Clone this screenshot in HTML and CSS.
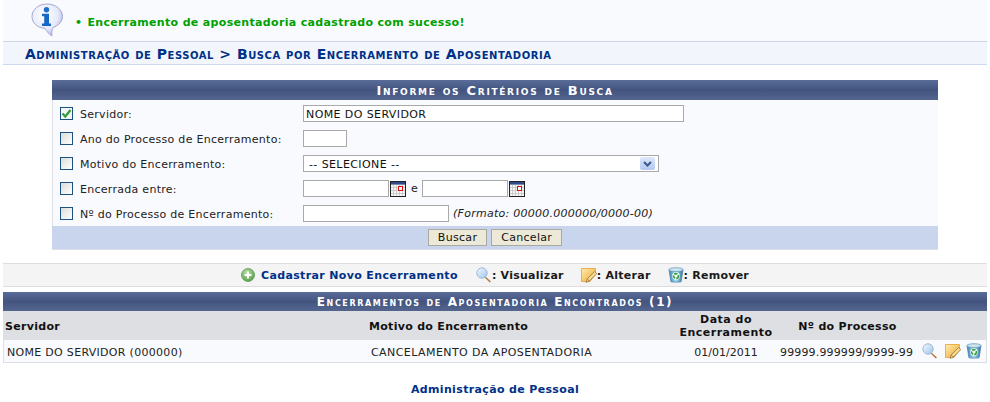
FILE: index.html
```html
<!DOCTYPE html>
<html lang="pt">
<head>
<meta charset="utf-8">
<title>Busca por Encerramento de Aposentadoria</title>
<link rel="stylesheet" href="styles.css">
</head>
<body>
<svg class="defs" width="0" height="0">
  <defs>
    <linearGradient id="gGlass" x1="0" y1="0" x2="1" y2="1"><stop offset="0" stop-color="#f4f9ff"/><stop offset="1" stop-color="#9fc3ea"/></linearGradient>
    <linearGradient id="gNote" x1="0" y1="0" x2="1" y2="1"><stop offset="0" stop-color="#fdeeb0"/><stop offset="1" stop-color="#f2a52c"/></linearGradient>
    <linearGradient id="gBin" x1="0" y1="0" x2="1" y2="0"><stop offset="0" stop-color="#3f7fb8"/><stop offset=".5" stop-color="#a8e0ee"/><stop offset="1" stop-color="#2f6fa8"/></linearGradient>
    <radialGradient id="gBubble" cx=".4" cy=".35" r=".7"><stop offset="0" stop-color="#ffffff"/><stop offset=".65" stop-color="#e6e9fb"/><stop offset="1" stop-color="#a9aede"/></radialGradient>
    <radialGradient id="gPlus" cx=".4" cy=".3" r=".8"><stop offset="0" stop-color="#b4dda0"/><stop offset="1" stop-color="#4f9a42"/></radialGradient>
    <symbol id="iGlass" viewBox="0 0 16 16">
      <path d="M9.5 9.5 15 14.5 13.8 15.6 8.6 10.6Z" fill="#b5793f"/>
      <circle cx="6" cy="6" r="5.2" fill="url(#gGlass)" stroke="#9dbbdd" stroke-width="1"/>
    </symbol>
    <symbol id="iNote" viewBox="0 0 16 16">
      <path d="M.5 1.5H14.5V7L9 14.5H.5Z" fill="url(#gNote)" stroke="#e8a030" stroke-width=".8"/>
      <path d="M13.6 4.5 15.8 6.6 8.4 14 5.2 15.4 6.2 12Z" fill="#f8dc90" stroke="#8f7040" stroke-width=".8"/>
      <path d="M6.2 12 8.4 14" stroke="#8f7040" stroke-width=".7"/>
    </symbol>
    <symbol id="iBin" viewBox="0 0 16 16">
      <path d="M1 2.5 2.8 14.6C3 15.4 13 15.4 13.2 14.6L15 2.5Z" fill="url(#gBin)" stroke="#3b6f9e" stroke-width=".6"/>
      <ellipse cx="8" cy="2.6" rx="7.2" ry="1.9" fill="#cfe6ee" stroke="#5f93ba" stroke-width=".7"/>
      <circle cx="8" cy="9" r="3.7" fill="#fff"/>
      <circle cx="8" cy="9" r="2.4" fill="none" stroke="#2e9c3a" stroke-width="1.6" stroke-dasharray="3.2 1"/>
    </symbol>
    <symbol id="iCal" viewBox="0 0 16 16">
      <rect x=".5" y=".5" width="15" height="15" fill="#f5f5f5" stroke="#222"/>
      <rect x="1" y="1" width="14" height="2.6" fill="#2d4a8a"/>
      <path d="M3.5 4V15M6.5 4V15M9.5 4V15M12.5 4V15M1 6.5H15M1 9.5H15M1 12.5H15" stroke="#c4c4c4" stroke-width=".8"/>
      <rect x="8.5" y="5.5" width="4" height="4" fill="#fff" stroke="#e01010"/>
    </symbol>
  </defs>
</svg>

<div class="message">
  <svg class="info-icon" width="33" height="34" viewBox="0 0 33 34" aria-hidden="true">
    <path d="M16 1C7.5 1 1 6.5 1 13.5 1 20 6.5 25 14 25.3 15.5 28 18 31.5 21 33 20.5 30.5 20.8 27 22 24.5 27.5 22.5 31.5 18.5 31.5 13.5 31.5 6.5 24.5 1 16 1Z" fill="url(#gBubble)" stroke="#a7a9cf" stroke-width="1"/>
    <circle cx="15.5" cy="6.8" r="2.7" fill="#1f6fc9"/>
    <path d="M11 10.8H18V20.5H20V23H11V20.5H13.2V13.2H11Z" fill="#1668c4"/>
  </svg>
  <ul class="message-list"><li>Encerramento de aposentadoria cadastrado com sucesso!</li></ul>
</div>

<h2 class="breadcrumb">Administração de Pessoal &gt; Busca por Encerramento de Aposentadoria</h2>

<form class="search">
  <h3 class="band">Informe os Critérios de Busca</h3>
  <div class="fields">
    <div class="field">
      <span class="check checked"><svg width="11" height="11" viewBox="0 0 11 11"><path d="M1.5 5.5 4.3 8.5 9.5 2" fill="none" stroke="#2f9e3f" stroke-width="2.2"/></svg></span>
      <label class="field-label">Servidor:</label>
      <span class="input wide">NOME DO SERVIDOR</span>
    </div>
    <div class="field">
      <span class="check"></span>
      <label class="field-label">Ano do Processo de Encerramento:</label>
      <span class="input year"></span>
    </div>
    <div class="field">
      <span class="check"></span>
      <label class="field-label">Motivo do Encerramento:</label>
      <span class="input select">-- SELECIONE --<span class="arrow"><svg width="9" height="6" viewBox="0 0 9 6"><path d="M1 1 4.5 4.5 8 1" fill="none" stroke="#3a5a8c" stroke-width="2"/></svg></span></span>
    </div>
    <div class="field">
      <span class="check"></span>
      <label class="field-label">Encerrada entre:</label>
      <span class="input date"></span>
      <svg class="cal" width="16" height="16"><use href="#iCal"/></svg>
      <span class="and">e</span>
      <span class="input date"></span>
      <svg class="cal" width="16" height="16"><use href="#iCal"/></svg>
    </div>
    <div class="field">
      <span class="check"></span>
      <label class="field-label">Nº do Processo de Encerramento:</label>
      <span class="input process"></span>
      <em class="hint">(Formato: 00000.000000/0000-00)</em>
    </div>
  </div>
  <div class="actions">
    <button type="button" class="btn">Buscar</button>
    <button type="button" class="btn">Cancelar</button>
  </div>
</form>

<div class="legend">
  <svg class="plus" width="14" height="14" viewBox="0 0 14 14"><circle cx="7" cy="7" r="6.5" fill="url(#gPlus)" stroke="#5b9a50" stroke-width=".8"/><path d="M7 3.5V10.5M3.5 7H10.5" stroke="#fff" stroke-width="2.2"/></svg>
  <a class="legend-link">Cadastrar Novo Encerramento</a>
  <span class="legend-item first"><svg width="16" height="16"><use href="#iGlass"/></svg>: Visualizar</span>
  <span class="legend-item"><svg width="16" height="16"><use href="#iNote"/></svg>: Alterar</span>
  <span class="legend-item"><svg width="16" height="16"><use href="#iBin"/></svg>: Remover</span>
</div>

<section class="results">
  <h3 class="band band-results">Encerramentos de Aposentadoria Encontrados (1)</h3>
  <div class="row head">
    <span class="c-name">Servidor</span>
    <span class="c-reason">Motivo do Encerramento</span>
    <span class="c-date">Data do Encerramento</span>
    <span class="c-proc">Nº do Processo</span>
  </div>
  <div class="row data">
    <span class="c-name">NOME DO SERVIDOR (000000)</span>
    <span class="c-reason">CANCELAMENTO DA APOSENTADORIA</span>
    <span class="c-date">01/01/2011</span>
    <span class="c-proc">99999.999999/9999-99</span>
    <span class="c-icons">
      <svg width="16" height="16"><use href="#iGlass"/></svg>
      <svg width="16" height="16"><use href="#iNote"/></svg>
      <svg width="16" height="16"><use href="#iBin"/></svg>
    </span>
  </div>
</section>

<footer class="foot"><a>Administração de Pessoal</a></footer>
</body>
</html>
```

FILE: styles.css
```css
* { box-sizing: border-box; }
html, body { margin: 0; padding: 0; background: #fff; }
body {
  width: 990px;
  height: 402px;
  overflow: hidden;
  font-family: "DejaVu Sans", Verdana, sans-serif;
  font-size: 11px;
  color: #222;
}
.defs { position: absolute; }
h2, h3 { margin: 0; }

.message {
  height: 41px;
  margin: 0 3px;
  background: #f9fafd;
  display: flex;
  align-items: flex-start;
  padding: 3px 0 0 28px;
}
.info-icon { flex: none; }
.message-list {
  margin: 13px 0 0;
  padding: 0 0 0 11px;
  list-style: none;
  color: #00a000;
  font-weight: bold;
  font-size: 11px;
  letter-spacing: .33px;
}
.message-list li::before { content: "•"; margin-right: 5px; }

.breadcrumb {
  height: 24px;
  margin: 0 3px;
  padding: 3px 0 0 22px;
  background: #f2f6fc;
  border-top: 1px solid #cdd6e8;
  border-bottom: 1px solid #cdd9ee;
  color: #003087;
  font-size: 14px;
  font-weight: bold;
  font-variant: small-caps;
  line-height: 18px;
  letter-spacing: .53px;
}

.search {
  width: 886px;
  margin: 15px 0 0 52px;
  background: #f9fafd;
  border-left: 1px solid #dcdfe4;
  border-bottom: 1px solid #dcdfe4;
}
.band {
  height: 20px;
  margin-left: -1px;
  background: linear-gradient(#5a6c99, #43547f 50%, #54658f);
  color: #fff;
  font-size: 13px;
  font-weight: bold;
  font-variant: small-caps;
  line-height: 21px;
  text-align: center;
  letter-spacing: 1.7px;
}
.fields { padding: 1px 0 0 7px; }
.field { height: 25px; display: flex; align-items: center; }
.field-label { width: 223px; flex: none; padding-top: 1px; letter-spacing: .28px; }
.check {
  flex: none;
  width: 13px;
  height: 13px;
  margin-right: 7px;
  border: 1px solid #1c5180;
  background: linear-gradient(135deg, #dcdcd7, #fff);
  display: flex;
  align-items: center;
  justify-content: center;
}
.check.checked { background: #f4f6f2; }
.input {
  display: block;
  flex: none;
  height: 17px;
  border: 1px solid #a9a9a9;
  background: #fff;
  color: #111;
  line-height: 17px;
  padding: 0 2px;
  letter-spacing: .4px;
}
.wide { width: 381px; }
.year { width: 44px; }
.select {
  width: 356px;
  padding-left: 5px;
  display: flex;
  justify-content: space-between;
}
.arrow {
  width: 15px;
  height: 13px;
  margin: 1px 1px 0 0;
  background: linear-gradient(#dde8fb, #b3c8f1);
  border-radius: 2px;
  display: flex;
  align-items: center;
  justify-content: center;
}
.date { width: 86px; }
.cal { margin-left: 1px; }
.and { margin: 0 4px 0 5px; }
.process { width: 146px; }
.hint { margin-left: 4px; letter-spacing: .26px; }

.actions {
  height: 23px;
  margin-left: -1px;
  background: #c8d5ec;
  display: flex;
  justify-content: center;
  align-items: center;
  gap: 4px;
}
.btn {
  height: 17px;
  padding: 0 9px;
  border: 1px solid #a9a9a0;
  background: #ece9d8;
  font: 11px "DejaVu Sans", Verdana, sans-serif;
  letter-spacing: .3px;
  color: #111;
}

.legend {
  height: 24px;
  margin: 13px 3px 0;
  background: #f4f4f4;
  border-top: 1px solid #ddd;
  border-bottom: 1px solid #ddd;
  display: flex;
  justify-content: center;
  align-items: center;
  font-weight: bold;
  color: #1a1a1a;
  letter-spacing: .25px;
}
.plus { margin-right: 6px; }
.legend-link { color: #003087; letter-spacing: .36px; }
.legend-item { display: flex; align-items: center; margin-left: 17px; }
.legend-item.first { margin-left: 18px; }

.results {
  margin: 5px 3px 0;
  border-bottom: 1px solid #dcdfe4;
  border-left: 1px solid #dcdfe4;
  border-right: 1px solid #dcdfe4;
}
.band-results {
  height: 19px;
  line-height: 20px;
  font-size: 12px;
  margin: 0 -1px;
  letter-spacing: 1.62px;
}
.row {
  display: grid;
  grid-template-columns: 364px 302px 110px 133px 1fr;
  align-items: center;
}
.head {
  height: 29px;
  margin: 0 -1px;
  padding-left: 2px;
  background: #dedfe3;
  font-weight: bold;
  color: #111;
  letter-spacing: .3px;
}
.head .c-name, .head .c-reason, .head .c-proc { padding-top: 2px; }
.data { height: 22px; background: #f9fafd; padding-left: 1px; }
.c-date { text-align: center; }
.head .c-date { line-height: 13px; letter-spacing: .5px; }
.head .c-proc { text-align: center; }
.data .c-name { padding: 2px 0 0 2px; letter-spacing: .3px; }
.data .c-reason { padding: 2px 0 0 2px; letter-spacing: .43px; }
.data .c-date { padding-top: 2px; }
.c-proc { white-space: nowrap; }
.data .c-proc { margin-left: -1px; padding-top: 2px; letter-spacing: .15px; }
.c-icons { display: flex; justify-content: flex-end; padding-right: 4px; }
.c-icons svg { flex: none; margin-left: 5px; }
.c-icons svg:nth-child(2) { margin-left: 7px; }

.foot {
  margin-top: 20px;
  text-align: center;
  font-weight: bold;
  color: #003087;
  letter-spacing: .35px;
}
```
